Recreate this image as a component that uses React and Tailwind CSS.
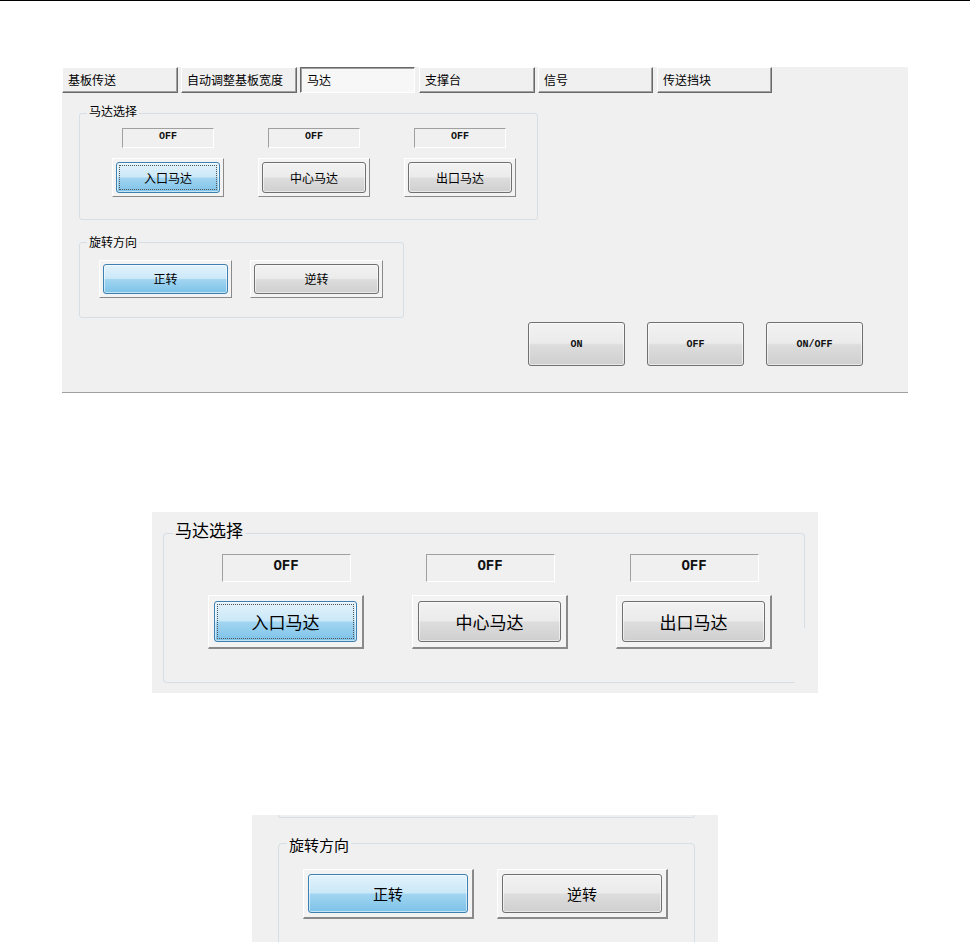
import React from "react";

const CJK = { fontFamily: '"Noto Sans CJK SC", "Noto Sans", sans-serif' };
const MONO = { fontFamily: '"Liberation Mono", "DejaVu Sans Mono", monospace' };

function Tab({ label, w, active }) {
  return (
    <div
      className={
        "h-[26px] flex items-center border text-[12px] leading-[16px] text-black " +
        (active
          ? "bg-[#f7f7f7] border-t-[#696969] border-l-[#696969] border-r-white border-b-white shadow-[inset_1px_1px_0_#a0a0a0] pl-[6px]"
          : "bg-[#f0f0f0] border-t-white border-l-white border-r-[#696969] border-b-[#696969] shadow-[inset_-1px_-1px_0_#a0a0a0] pl-[5px]")
      }
      style={{ width: w }}
    >
      {label}
    </div>
  );
}

function AeroFace({ blue, focus, children, textClass }) {
  return (
    <div
      className={
        "relative w-full h-full rounded-[3px] border flex items-center justify-center shadow-[inset_0_0_0_1px_rgba(255,255,255,0.55)] " +
        (blue
          ? "border-[#3c7fb1] bg-[linear-gradient(to_bottom,#e3f3fc_0%,#cbe8f8_48%,#a2d5f1_52%,#7cc2e8_100%)]"
          : "border-[#707070] bg-[linear-gradient(to_bottom,#f2f2f2_0%,#ebebeb_48%,#dddddd_52%,#cfcfcf_100%)]") +
        " " +
        textClass
      }
    >
      {focus && (
        <span className="absolute inset-[2px] border border-dotted border-[#555]" />
      )}
      <span className="relative">{children}</span>
    </div>
  );
}

function FramedButton({ w, h, pad, blue, focus, thick, children, textClass }) {
  return (
    <div
      className={
        "border-t border-l border-t-white border-l-white border-r-[#8a8a8a] border-b-[#8a8a8a] bg-[#f3f3f3] shrink-0 " +
        (thick ? "border-r-2 border-b-2" : "border-r border-b")
      }
      style={{ width: w, height: h, padding: pad }}
    >
      <AeroFace blue={blue} focus={focus} textClass={textClass}>
        {children}
      </AeroFace>
    </div>
  );
}

function OffBox({ w, h, textClass }) {
  return (
    <div
      className={
        "border border-t-[#a0a0a0] border-l-[#a0a0a0] border-r-white border-b-white bg-[#f0f0f0] text-center font-bold text-[#111] " +
        textClass
      }
      style={{ width: w, height: h, ...MONO }}
    >
      OFF
    </div>
  );
}

export default function App() {
  const motors = ["入口马达", "中心马达", "出口马达"];
  return (
    <div className="w-[970px] h-[942px] bg-white overflow-hidden" style={CJK}>
      <div className="h-px bg-black" />

      {/* main panel */}
      <div className="ml-[62px] mt-[66px] w-[846px] h-[326px] bg-[#f0f0f0] border-b border-[#a0a0a0] flex flex-col">
        <div className="flex h-[26px]">
          <Tab label="基板传送" w={116} />
          <div className="w-[3px]" />
          <Tab label="自动调整基板宽度" w={116} />
          <div className="w-[3px]" />
          <Tab label="马达" w={115} active />
          <div className="w-[4px]" />
          <Tab label="支撑台" w={116} />
          <div className="w-[3px]" />
          <Tab label="信号" w={115} />
          <div className="w-[4px]" />
          <Tab label="传送挡块" w={115} />
        </div>

        {/* group 1 */}
        <div className="relative ml-[17px] mt-[20px] w-[459px] h-[107px] border border-[#d5dfe5] rounded-[3px] pt-[14px] pl-[15px] flex">
          <span className="absolute left-[7px] top-[-11px] px-[2px] bg-[#f0f0f0] text-[12px] leading-[16px] text-black">
            马达选择
          </span>
          {motors.map((m, i) => (
            <div key={m} className="w-[146px] flex flex-col items-center gap-[10px]">
              <OffBox w={92} h={20} textClass="text-[10px] leading-[12px] pt-[2px]" />
              <FramedButton
                w={112}
                h={39}
                pad={3}
                blue={i === 0}
                focus={i === 0}
                textClass="text-[12px] leading-[16px] text-black"
              >
                {m}
              </FramedButton>
            </div>
          ))}
        </div>

        {/* group 2 */}
        <div className="relative ml-[17px] mt-[22px] w-[325px] h-[76px] border border-[#d5dfe5] rounded-[3px] pt-[17px] pl-[19px] flex gap-[18px]">
          <span className="absolute left-[7px] top-[-9px] px-[2px] bg-[#f0f0f0] text-[12px] leading-[16px] text-black">
            旋转方向
          </span>
          <FramedButton w={133} h={38} pad={3} blue textClass="text-[12px] leading-[16px] text-black">
            正转
          </FramedButton>
          <FramedButton w={133} h={38} pad={3} textClass="text-[12px] leading-[16px] text-black">
            逆转
          </FramedButton>
        </div>

        {/* on/off row */}
        <div className="mt-[4px] flex justify-end pr-[45px] gap-[22px]">
          {["ON", "OFF", "ON/OFF"].map((t) => (
            <div key={t} className="w-[97px] h-[44px]">
              <AeroFace textClass="text-[10px] leading-[12px] font-bold text-[#111]">
                <span style={MONO}>{t}</span>
              </AeroFace>
            </div>
          ))}
        </div>
      </div>

      {/* enlarged group 1 */}
      <div className="ml-[152px] mt-[119px] w-[666px] h-[181px] bg-[#f0f0f0] pt-[21px] pl-[11px]">
        <div className="relative w-[642px] h-[150px] pt-[21px] pl-[21px] flex">
          <div className="absolute left-0 top-0 w-[642px] h-[95px] border-t border-l border-r border-[#d5dfe5] rounded-t-[4px]" />
          <div className="absolute left-0 top-[94px] w-[632px] h-[56px] border-l border-b border-[#d5dfe5] rounded-bl-[4px]" />
          <span className="absolute left-[10px] top-[-13px] px-[2px] bg-[#f0f0f0] text-[17px] leading-[20px] text-black">
            马达选择
          </span>
          {motors.map((m, i) => (
            <div key={m} className="relative w-[204px] flex flex-col items-center gap-[13px]">
              <OffBox w={129} h={28} textClass="text-[14px] leading-[16px] pt-[3px]" />
              <FramedButton
                w={156}
                h={54}
                pad={5}
                thick
                blue={i === 0}
                focus={i === 0}
                textClass="text-[17px] leading-[22px] text-black"
              >
                {m}
              </FramedButton>
            </div>
          ))}
        </div>
      </div>

      {/* enlarged group 2 */}
      <div className="ml-[252px] mt-[122px] w-[466px] h-[127px] bg-[#f0f0f0] overflow-hidden">
        <div className="ml-[26px] w-[417px] h-[3px] border-b border-l border-r border-[#d5dfe5] rounded-b-[4px]" />
        <div className="relative ml-[26px] mt-[25px] w-[417px] h-[140px] border border-[#d5dfe5] rounded-[4px] pt-[25px] pl-[24px] flex gap-[23px]">
          <span className="absolute left-[8px] top-[-9px] px-[2px] bg-[#f0f0f0] text-[15px] leading-[20px] text-black">
            旋转方向
          </span>
          <FramedButton w={171} h={50} pad={4} thick blue textClass="text-[15px] leading-[20px] text-black">
            正转
          </FramedButton>
          <FramedButton w={171} h={50} pad={4} thick textClass="text-[15px] leading-[20px] text-black">
            逆转
          </FramedButton>
        </div>
      </div>
    </div>
  );
}
